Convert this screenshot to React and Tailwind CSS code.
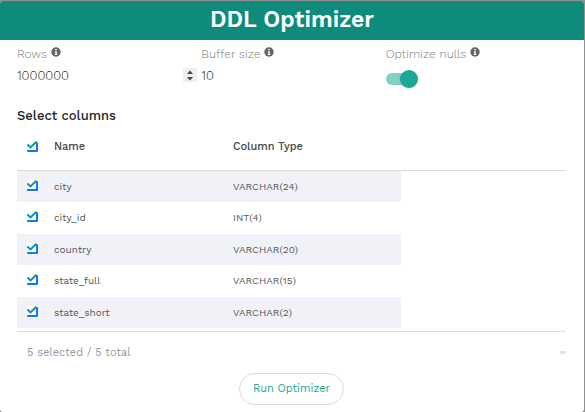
import { useState } from "react";

const COLUMNS = [
  { name: "city", type: "VARCHAR(24)" },
  { name: "city_id", type: "INT(4)" },
  { name: "country", type: "VARCHAR(20)" },
  { name: "state_full", type: "VARCHAR(15)" },
  { name: "state_short", type: "VARCHAR(2)" },
];

function InfoIcon() {
  return (
    <svg viewBox="0 0 10 10" className="size-[10px] text-[#666666]" aria-hidden="true">
      <circle cx="5" cy="5" r="4.7" fill="currentColor" />
      <path d="M4.2 2h1.6v1.2H4.2zM4 4.2h1.8v2.9h.5V8H3.8V7.1h.5V5.1H4z" fill="#fff" />
    </svg>
  );
}

function FieldLabel({ htmlFor, children }) {
  return (
    <label htmlFor={htmlFor} className="flex h-5 gap-1 text-xs leading-5 font-light text-[#7c7c7c]">
      {children}
      <span className="pt-[3px]">
        <InfoIcon />
      </span>
    </label>
  );
}

function NumberField({ id, value, stepper }) {
  return (
    <div className="relative">
      <input
        id={id}
        type="number"
        defaultValue={value}
        className="block h-[22px] w-full text-[13px] leading-5 font-light text-[#222222] outline-none [&::-webkit-inner-spin-button]:opacity-0"
      />
      {stepper && (
        <svg
          viewBox="0 0 14 14"
          className="pointer-events-none absolute top-1 right-0 size-[14px] bg-[#efefef]"
          aria-hidden="true"
        >
          <path d="M4 6L7 2.5L10 6ZM4 9L7 12.5L10 9Z" fill="#444444" />
        </svg>
      )}
    </div>
  );
}

function CheckBox({ label, checked, onChange }) {
  return (
    <label className="relative block h-3 w-[11px]">
      <input
        type="checkbox"
        aria-label={label}
        checked={checked}
        onChange={onChange}
        className="block h-3 w-[11px] appearance-none bg-white"
      />
      {checked && (
        <svg viewBox="0 0 11 12" className="pointer-events-none absolute inset-0 h-3 w-[11px]" aria-hidden="true">
          <path d="M0 9H9V1H10Q11 1 11 2V10Q11 11 10 11H1Q0 11 0 10Z" fill="#0b78ff" />
          <path d="M0.4 3.4L3.5 6.4L9.4 0.8" fill="none" stroke="#0f9688" strokeWidth="2" />
        </svg>
      )}
    </label>
  );
}

export default function App() {
  const [selected, setSelected] = useState(COLUMNS.map((c) => c.name));
  const [optimizeNulls, setOptimizeNulls] = useState(true);
  const all = selected.length === COLUMNS.length;

  const toggle = (name) =>
    setSelected((s) => (s.includes(name) ? s.filter((n) => n !== name) : [...s, name]));

  return (
    <div className="min-h-screen bg-[#8f8f8f] pt-px pr-px font-['Work_Sans',Inter,sans-serif]">
      <main className="flex min-h-[calc(100vh-1px)] flex-col overflow-hidden rounded-[3px] bg-white">
        <header className="flex h-[39px] items-center justify-center bg-[#0f8b7c] pb-[2px]">
          <h1 className="text-[23px] leading-8 font-semibold text-white">DDL Optimizer</h1>
        </header>

        <form className="flex flex-1 flex-col pr-[18px] pl-[17px]" onSubmit={(e) => e.preventDefault()}>
          <div className="grid grid-cols-3 gap-1 pt-1">
            <div>
              <FieldLabel htmlFor="rows">Rows</FieldLabel>
              <NumberField id="rows" value="1000000" stepper />
            </div>
            <div>
              <FieldLabel htmlFor="buffer">Buffer size</FieldLabel>
              <NumberField id="buffer" value="10" />
            </div>
            <div>
              <FieldLabel htmlFor="nulls">Optimize nulls</FieldLabel>
              <label className="relative mt-[6px] flex h-[18px] w-[33px] items-center">
                <input
                  id="nulls"
                  type="checkbox"
                  role="switch"
                  checked={optimizeNulls}
                  onChange={() => setOptimizeNulls(!optimizeNulls)}
                  className="peer h-3 w-7 appearance-none rounded-full bg-[#bdbdbd] checked:bg-[#84cfc7]"
                />
                <span className="pointer-events-none absolute left-0 size-[18px] rounded-full bg-white shadow peer-checked:left-[14px] peer-checked:bg-[#1aa798]" />
              </label>
            </div>
          </div>

          <h2 className="mt-[18px] text-[13px] leading-5 font-medium text-[#222222]">Select columns</h2>

          <div className="border-b border-[#dddddd] pb-[3px]">
            <table className="w-full table-fixed border-separate border-spacing-0 text-left">
              <colgroup>
                <col className="w-[37px]" />
                <col className="w-[179px]" />
                <col className="w-[168px]" />
                <col />
              </colgroup>
              <thead>
                <tr className="h-[45px] text-[11px] leading-4 text-[#444444] [&>th]:border-b [&>th]:border-[#dddddd] [&>th]:pb-[2px] [&>th]:font-medium">
                  <th className="pl-[10px]">
                    <CheckBox
                      label="Select all columns"
                      checked={all}
                      onChange={() => setSelected(all ? [] : COLUMNS.map((c) => c.name))}
                    />
                  </th>
                  <th>Name</th>
                  <th>Column Type</th>
                  <th />
                </tr>
              </thead>
              <tbody className="text-[10px] leading-4 text-[#555555]">
                {COLUMNS.map((c) => (
                  <tr
                    key={c.name}
                    className="h-[31px] even:h-8 odd:[&>td:not(:last-child)]:bg-[#f1f2f8]"
                  >
                    <td className="pb-[2px] pl-[10px]">
                      <CheckBox
                        label={"Select " + c.name}
                        checked={selected.includes(c.name)}
                        onChange={() => toggle(c.name)}
                      />
                    </td>
                    <td>{c.name}</td>
                    <td>{c.type}</td>
                    <td />
                  </tr>
                ))}
              </tbody>
            </table>
          </div>

          <div className="flex h-10 items-center justify-between pl-[10px] text-[11px] text-[#979797]">
            <span className="pt-[2px]">
              {selected.length} selected / {COLUMNS.length} total
            </span>
            <span className="h-[3px] w-[6px] bg-[#e1e5ef]" />
          </div>

          <button
            type="submit"
            className="mt-px mb-[7px] h-8 self-center rounded-full border border-[#dddddd] px-[13px] text-[11px] text-[#1aa798]"
          >
            Run Optimizer
          </button>
        </form>
      </main>
    </div>
  );
}
